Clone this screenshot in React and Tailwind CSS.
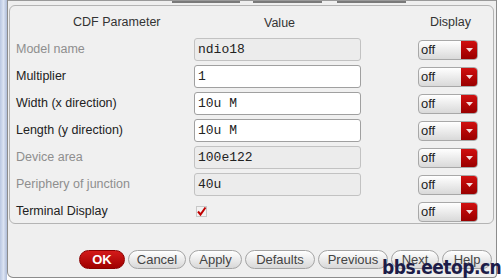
import React from 'react';

const rows = [
  { label: 'Model name', value: 'ndio18', enabled: false },
  { label: 'Multiplier', value: '1', enabled: true },
  { label: 'Width (x direction)', value: '10u M', enabled: true },
  { label: 'Length (y direction)', value: '10u M', enabled: true },
  { label: 'Device area', value: '100e122', enabled: false },
  { label: 'Periphery of junction', value: '40u', enabled: false },
];

const buttons = [
  { label: 'Cancel', w: 'w-[58px]' },
  { label: 'Apply', w: 'w-[53px]' },
  { label: 'Defaults', w: 'w-[70px]' },
  { label: 'Previous', w: 'w-[70px]' },
  { label: 'Next', w: 'w-[48px]' },
  { label: 'Help', w: 'w-[50px]' },
];

function DisplaySelect() {
  return (
    <div className="flex h-[20px] w-[60px] overflow-hidden rounded-[4px] border border-[#a8a8a8] bg-gradient-to-b from-white to-[#d9d9d9]">
      <span className="flex-1 pl-[2px] text-[13px] leading-[18px] text-[#222]">off</span>
      <span className="flex w-[16px] items-center justify-center bg-gradient-to-b from-[#d01010] to-[#9a0000]">
        <svg width="7" height="4" viewBox="0 0 7 4">
          <path d="M0 0 L7 0 L3.5 4 Z" fill="#f4dede" />
        </svg>
      </span>
    </div>
  );
}

export default function App() {
  return (
    <div className="relative flex h-[280px] w-[501px] overflow-hidden bg-white font-['Liberation_Sans',Arial,sans-serif]">
      {/* window edge */}
      <div className="w-[7px] bg-gradient-to-r from-[#b9c7e2] via-[#dbe3f2] to-[#aebcd8]" />

      <div className="flex h-[278px] w-[490px] flex-col rounded-bl-[6px] rounded-br-[4px] border-l border-b border-r border-[#8c8c8c] bg-[#efefef]">
        {/* remnants of the bar above */}
        <div className="flex h-[5px] items-start border-t border-[#9a9a9a]">
          <div className="ml-[164px] h-[2px] w-[68px] bg-[#7a7a7a]" />
          <div className="ml-[13px] h-[2px] w-[69px] bg-[#7a7a7a]" />
          <div className="ml-[15px] h-[2px] w-[69px] bg-[#7a7a7a]" />
        </div>

        {/* CDF group box */}
        <div className="ml-[1px] h-[219px] w-[485px] rounded-[6px] border border-[#b4b4b4] bg-[#f0f0f0] pl-[6px]">
          <div className="grid grid-cols-[178px_224px_60px] text-[12.5px] text-[#333]">
            <div className="h-[30px] pt-[7px] pl-[57px] text-[#333]">CDF Parameter</div>
            <div className="h-[30px] pt-[8px] pl-[70px]">Value</div>
            <div className="h-[30px] pt-[7px] pl-[12px]">Display</div>

            {rows.map((r) => (
              <React.Fragment key={r.label}>
                <div className={`flex h-[27px] items-center ${r.enabled ? 'text-[#222]' : 'text-[#8e8e8e]'}`}>
                  {r.label}
                </div>
                <div className="flex h-[27px] items-center">
                  <div
                    className={`h-[23px] w-[167px] rounded-[3px] border pl-[3px] font-['Liberation_Mono',monospace] text-[13px] leading-[21px] text-[#222] ${
                      r.enabled ? 'border-[#a0a0a0] bg-white' : 'border-[#c2c2c2] bg-[#ececec]'
                    }`}
                  >
                    {r.value}
                  </div>
                </div>
                <div className="flex h-[27px] items-center">
                  <DisplaySelect />
                </div>
              </React.Fragment>
            ))}

            <div className="flex h-[27px] items-center text-[#222]">Terminal Display</div>
            <div className="flex h-[27px] items-center pl-[2px]">
              <svg width="11" height="11" viewBox="0 0 11 11">
                <rect x="0.5" y="0.5" width="10" height="10" fill="#f2f2f2" stroke="#c8c8c8" />
                <path d="M2 5.5 L4.5 8.5 L9.5 1.5" fill="none" stroke="#c00000" strokeWidth="2" />
              </svg>
            </div>
            <div className="flex h-[27px] items-center">
              <DisplaySelect />
            </div>
          </div>
        </div>

        {/* buttons */}
        <div className="mt-[26px] flex gap-[3px] pl-[71px]">
          <button className="h-[19px] w-[46px] rounded-full border border-[#8a0000] bg-gradient-to-b from-[#d41a1a] to-[#a00000] text-[13px] font-bold leading-[17px] text-white">
            OK
          </button>
          {buttons.map((b) => (
            <button
              key={b.label}
              className={`h-[19px] ${b.w} rounded-full border border-[#a4a4a4] bg-gradient-to-b from-white to-[#d8d8d8] text-[13px] leading-[17px] text-[#444]`}
            >
              {b.label}
            </button>
          ))}
        </div>
      </div>

      {/* watermark */}
      <div className="absolute left-[382px] top-[256px] font-['DejaVu_Sans_Condensed','DejaVu_Sans',sans-serif] text-[19px] font-bold leading-[22px] tracking-[-0.5px] text-[#1c1c48]">
        bbs.eetop.cn
      </div>
    </div>
  );
}
